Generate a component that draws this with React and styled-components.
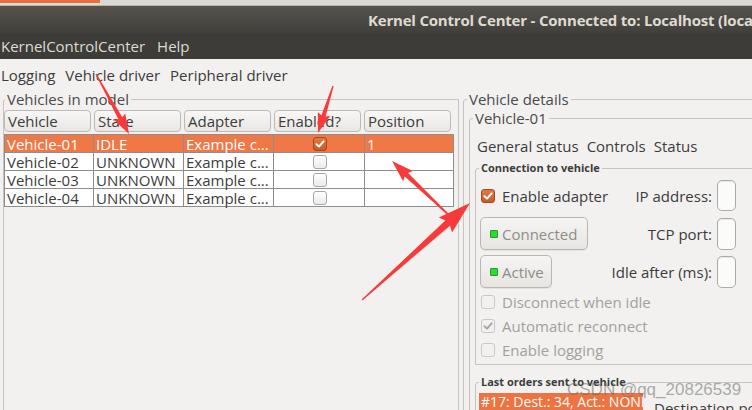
import React from 'react'
import styled, { createGlobalStyle } from 'styled-components'

const GlobalStyle = createGlobalStyle`
    html, body { margin:0; padding:0; background:#f2f1f0; }
    body { width:752px; height:410px; overflow:hidden; }
`

const Screen = styled.div`
    position:relative;
    width:752px;
    height:410px;
    overflow:hidden;
    background:#f2f1f0;
    font-family:"Open Sans", "Noto Sans", sans-serif;
    font-size:15px;
    color:#3c3c3c;
`

const BackStrip = styled.div`
    height:6px;
    background:#dcdad6;
    border-bottom:1px solid #b9b6b0;
    box-sizing:border-box;
    display:flex;
`
const BackTab = styled.div`
    width:100px;
    height:3px;
    background:#e4703c;
`

const TitleBar = styled.div`
    height:27px;
    background:linear-gradient(#57544e, #413f3b);
    display:flex;
    align-items:center;
    padding-left:368px;
    white-space:nowrap;
    overflow:hidden;
    color:#dfdbd2;
    font-weight:700;
    font-size:15px;
    letter-spacing:-0.2px;
`

const MenuBar = styled.div`
    height:26px;
    background:#3d3c38;
    display:flex;
    align-items:center;
    gap:12px;
    padding-left:1px;
    color:#dfdbd2;
`

const Tabs = styled.div`
    height:32px;
    display:flex;
    align-items:center;
    gap:${p => p.gap || 10}px;
    padding-left:${p => p.indent || 1}px;
    white-space:nowrap;
`

const Main = styled.div`
    display:flex;
    gap:4px;
    padding-left:3px;
`

const Frame = styled.fieldset`
    flex:none;
    margin:0;
    margin-top:${p => p.top || 0}px;
    padding:${p => p.pad || '0'};
    border:1px solid #c7c4bf;
    border-radius:3px 0 0 0;
    width:${p => p.width}px;
    min-width:0;
    box-sizing:border-box;
    min-height:${p => p.minHeight || 0}px;
`

const Legend = styled.legend`
    margin-left:${p => p.indent || 0}px;
    padding:0 2px;
    line-height:${p => p.bold ? 14 : 16}px;
    font-size:${p => p.bold ? 11 : 15}px;
    font-weight:${p => p.bold ? 700 : 400};
    color:${p => p.bold ? '#3c3c3c' : '#4a4a4a'};
    white-space:nowrap;
`

const HeaderRow = styled.div`
    display:grid;
    grid-template-columns:repeat(5, 87px);
    gap:3px;
    margin-top:3px;
`

const HeaderCell = styled.div`
    height:22px;
    box-sizing:border-box;
    border:1px solid #bdbab5;
    border-radius:4px;
    background:linear-gradient(#f8f7f6, #e9e7e4);
    padding-left:3px;
    line-height:20px;
    white-space:nowrap;
    overflow-x:clip;
`

const Rows = styled.div`
    margin-top:2px;
    width:450px;
    border:1px solid #8d8d8d;
    border-bottom:none;
    box-sizing:border-box;
    background:#fff;
`

const Row = styled.div`
    display:grid;
    grid-template-columns:89px 90px 90px 91px 88px;
    height:18px;
    border-bottom:1px solid #8d8d8d;
    box-sizing:border-box;
    background:${p => p.selected ? '#f07746' : '#fff'};
    color:${p => p.selected ? '#fff' : '#3c3c3c'};
`

const Cell = styled.div`
    border-right:${p => p.last ? 'none' : '1px solid #8d8d8d'};
    padding-left:2px;
    line-height:16px;
    white-space:nowrap;
    overflow-x:clip;
    display:flex;
    align-items:center;
    justify-content:${p => p.center ? 'center' : 'flex-start'};
`

const Box = styled.span`
    width:14px;
    height:14px;
    box-sizing:border-box;
    border-radius:3px;
    display:inline-flex;
    align-items:center;
    justify-content:center;
    flex:none;
    border:1px solid ${p => p.orange ? '#a5491f' : p.disabled ? '#cbc8c3' : '#a9a6a1'};
    background:${p => p.orange ? 'linear-gradient(#e6773f, #c95a2b)' : p.disabled ? '#f2f1ef' : 'linear-gradient(#fff, #ecebe9)'};
`

const Details = styled.div`
    width:290px;
`

const ConnBody = styled.div`
    display:flex;
    flex-direction:column;
`

const FieldRow = styled.div`
    display:flex;
    align-items:center;
    justify-content:space-between;
    height:${p => p.h}px;
    margin-top:${p => p.gap || 0}px;
`

const CheckRow = styled.label`
    display:flex;
    align-items:center;
    gap:7px;
    height:24px;
    padding-left:1px;
    color:${p => p.disabled ? '#a3a09c' : '#3c3c3c'};
    white-space:nowrap;
`

const Field = styled.div`
    display:flex;
    align-items:center;
    gap:5px;
    white-space:nowrap;
`

const Entry = styled.div`
    width:19px;
    height:${p => p.h || 31}px;
    box-sizing:border-box;
    border:1px solid #aeaba6;
    border-radius:5px;
    background:#fbfbfa;
    box-shadow:inset 0 1px 1px rgba(0,0,0,0.08);
`

const Button = styled.div`
    width:${p => p.w}px;
    height:33px;
    box-sizing:border-box;
    border:1px solid #bab7b2;
    border-radius:5px;
    background:linear-gradient(#f6f5f4, #e7e5e2);
    box-shadow:0 1px 0 rgba(0,0,0,0.06);
    display:flex;
    align-items:center;
    gap:4px;
    padding-left:9px;
    color:#8e8c89;
`

const Led = styled.span`
    width:6px;
    height:6px;
    border-radius:1px;
    background:#1ee61e;
    border:1px solid #3f8a3f;
    flex:none;
`

const Orders = styled.div`
    display:flex;
    align-items:flex-start;
    gap:11px;
    padding-top:4px;
    white-space:nowrap;
`

const OrderItem = styled.div`
    width:164px;
    height:18px;
    line-height:18px;
    font-size:14px;
    background:#ee7340;
    color:#fff;
    padding-left:2px;
    box-sizing:border-box;
    overflow-x:clip;
`

const OrderLabel = styled.div`
    margin-top:6px;
    line-height:18px;
`

const Watermark = styled.div`
    position:absolute;
    left:567px;
    top:380px;
    white-space:nowrap;
    font-family:"Liberation Sans", Arial, sans-serif;
    font-size:17px;
    color:rgba(105,105,105,0.55);
    pointer-events:none;
`

const Overlay = styled.svg`
    position:absolute;
    left:0;
    top:0;
    pointer-events:none;
`

function Check({ color = '#fff' }) {
    return (
        <svg width="10" height="10" viewBox="0 0 10 10">
            <path d="M1.5 5.2 L4 7.6 L8.6 2.4" fill="none" stroke={color} strokeWidth="2" strokeLinecap="round" strokeLinejoin="round" />
        </svg>
    )
}

function arrow(x1, y1, x2, y2, tail, shaft, head, len) {
    const dx = x2 - x1, dy = y2 - y1
    const L = Math.hypot(dx, dy)
    const ux = dx / L, uy = dy / L
    const nx = -uy, ny = ux
    const bx = x2 - ux * len, by = y2 - uy * len
    const wx = x2 - ux * len * 1.1, wy = y2 - uy * len * 1.1
    const pts = [
        [x1 + nx * tail, y1 + ny * tail],
        [bx + nx * shaft, by + ny * shaft],
        [wx + nx * head, wy + ny * head],
        [x2, y2],
        [wx - nx * head, wy - ny * head],
        [bx - nx * shaft, by - ny * shaft],
        [x1 - nx * tail, y1 - ny * tail],
    ]
    return pts.map(p => p.map(v => v.toFixed(1)).join(',')).join(' ')
}

const arrows = [
    [96, 74, 129, 134, 0.6, 2.2, 6.5, 18],
    [333, 86, 318, 133, 0.6, 2.2, 6.5, 18],
    [455, 221, 392, 161, 0.6, 2.4, 7, 20],
    [362, 300, 470, 203, 0.6, 3.5, 10, 30],
]

const vehicles = [
    { name: 'Vehicle-01', state: 'IDLE', enabled: true, position: '1' },
    { name: 'Vehicle-02', state: 'UNKNOWN', enabled: false, position: '' },
    { name: 'Vehicle-03', state: 'UNKNOWN', enabled: false, position: '' },
    { name: 'Vehicle-04', state: 'UNKNOWN', enabled: false, position: '' },
]

export default function App() {
    return (
        <Screen>
            <GlobalStyle />
            <BackStrip><BackTab /></BackStrip>
            <TitleBar>Kernel Control Center - Connected to: Localhost (loca</TitleBar>
            <MenuBar>
                <span>KernelControlCenter</span>
                <span>Help</span>
            </MenuBar>
            <Tabs>
                <span>Logging</span>
                <span>Vehicle driver</span>
                <span>Peripheral driver</span>
            </Tabs>
            <Main>
                <Frame width={456} minHeight={330}>
                    <Legend indent={1}>Vehicles in model</Legend>
                    <HeaderRow>
                        <HeaderCell>Vehicle</HeaderCell>
                        <HeaderCell>State</HeaderCell>
                        <HeaderCell>Adapter</HeaderCell>
                        <HeaderCell>Enabled?</HeaderCell>
                        <HeaderCell>Position</HeaderCell>
                    </HeaderRow>
                    <Rows>
                        {vehicles.map((v, i) => (
                            <Row key={v.name} selected={i === 0}>
                                <Cell>{v.name}</Cell>
                                <Cell>{v.state}</Cell>
                                <Cell>Example c...</Cell>
                                <Cell center>
                                    <Box orange={v.enabled}>{v.enabled && <Check />}</Box>
                                </Cell>
                                <Cell last>{v.position}</Cell>
                            </Row>
                        ))}
                    </Rows>
                </Frame>
                <Frame width={300} pad="3px 0 0 5px" minHeight={330}>
                    <Legend indent={-2}>Vehicle details</Legend>
                    <Frame width={300} pad="0 0 0 5px" minHeight={300}>
                        <Legend indent={-2}>Vehicle-01</Legend>
                        <Tabs gap={8} indent={2} style={{ marginTop: 5, height: 30 }}>
                            <span>General status</span>
                            <span>Controls</span>
                            <span>Status</span>
                        </Tabs>
                        <Details>
                            <Frame width={290} pad="5px 28px 2px 4px">
                                <Legend bold indent={-1}>Connection to vehicle</Legend>
                                <ConnBody>
                                    <FieldRow h={31}>
                                        <CheckRow>
                                            <Box orange><Check /></Box>
                                            Enable adapter
                                        </CheckRow>
                                        <Field>IP address: <Entry /></Field>
                                    </FieldRow>
                                    <FieldRow h={33} gap={6}>
                                        <Button w={108}><Led />Connected</Button>
                                        <Field>TCP port: <Entry h={32} /></Field>
                                    </FieldRow>
                                    <FieldRow h={33} gap={5}>
                                        <Button w={72}><Led />Active</Button>
                                        <Field>Idle after (ms): <Entry h={32} /></Field>
                                    </FieldRow>
                                    <CheckRow disabled style={{ marginTop: 2 }}>
                                        <Box disabled />
                                        Disconnect when idle
                                    </CheckRow>
                                    <CheckRow disabled>
                                        <Box disabled><Check color="#a9a6a2" /></Box>
                                        Automatic reconnect
                                    </CheckRow>
                                    <CheckRow disabled>
                                        <Box disabled />
                                        Enable logging
                                    </CheckRow>
                                </ConnBody>
                            </Frame>
                            <Frame width={290} top={10} pad="0 0 0 3px" minHeight={60}>
                                <Legend bold indent={0}>Last orders sent to vehicle</Legend>
                                <Orders>
                                    <OrderItem>#17: Dest.: 34, Act.: NONE</OrderItem>
                                    <OrderLabel>Destination point</OrderLabel>
                                </Orders>
                            </Frame>
                        </Details>
                    </Frame>
                </Frame>
            </Main>
            <Watermark>CSDN @qq_20826539</Watermark>
            <Overlay width="752" height="410" viewBox="0 0 752 410">
                {arrows.map((a, i) => (
                    <polygon key={i} points={arrow(...a)} fill="#f73b3b" />
                ))}
            </Overlay>
        </Screen>
    )
}
